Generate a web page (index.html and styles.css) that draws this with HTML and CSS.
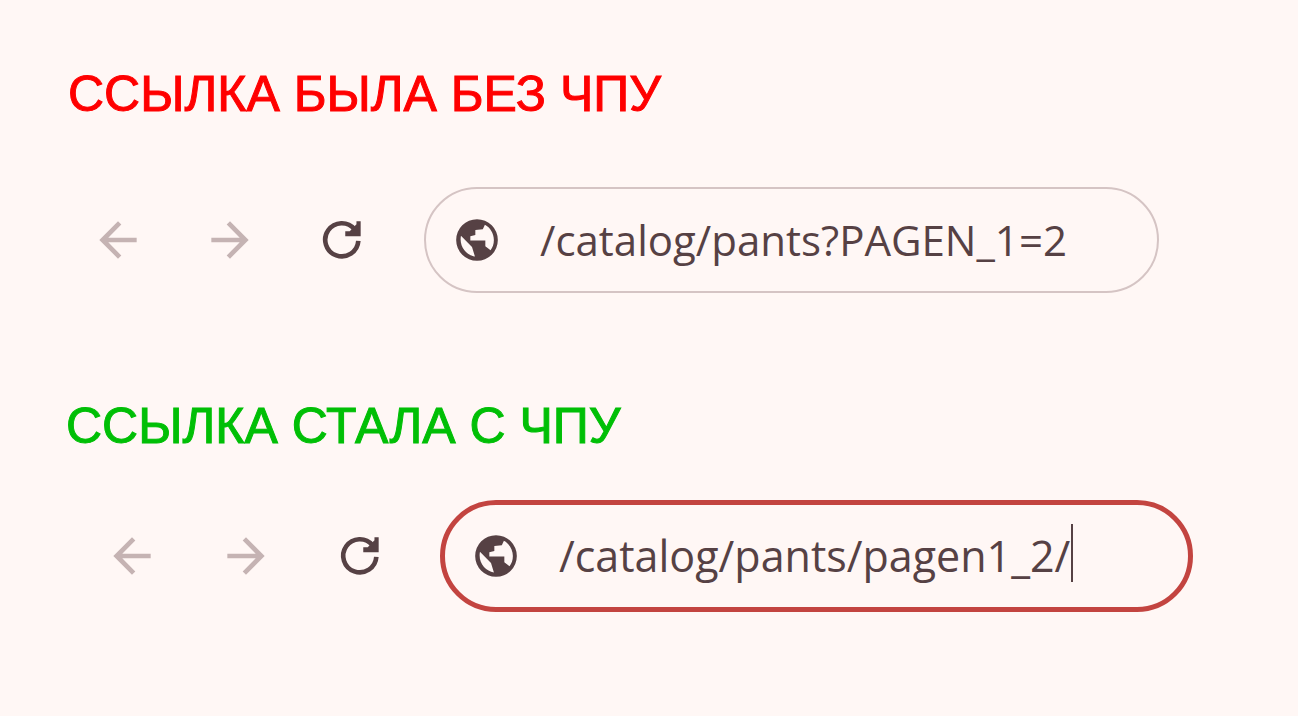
FILE: index.html
```html
<!DOCTYPE html>
<html lang="ru">
<head>
  <meta charset="UTF-8">
  <title>ЧПУ</title>
  <link rel="stylesheet" href="styles.css">
</head>
<body>

  <section class="example before">
    <h2>ССЫЛКА БЫЛА БЕЗ ЧПУ</h2>
    <div class="browser">
      <div class="nav">
        <button type="button" class="muted" aria-label="Назад">
          <svg viewBox="0 0 24 24"><path d="M20 11H7.83l5.59-5.59L12 4l-8 8 8 8 1.41-1.41L7.83 13H20v-2z"/></svg>
        </button>
        <button type="button" class="muted" aria-label="Вперёд">
          <svg viewBox="0 0 24 24"><path d="M12 4l-1.41 1.41L16.17 11H4v2h12.17l-5.58 5.59L12 20l8-8z"/></svg>
        </button>
        <button type="button" aria-label="Обновить">
          <svg viewBox="0 0 24 24"><path class="ring" d="M17.4 7.4A7.1 7.1 0 1 0 19 12.4"/><path d="M20 4v6.4h-6.6V8.3l1.9-.1 2.9-2.9V4z"/></svg>
        </button>
      </div>
      <label class="address">
        <svg viewBox="0 0 24 24"><path fill-rule="evenodd" d="M12 2a10 10 0 1 0 0 20 10 10 0 0 0 0-20zM4.3 9.9L9.6 15.4L11 19.9C7 19.4 3.3 15.4 4.3 9.9zM15.8 4.7C18.3 6 20.1 8.9 20.1 12 20.1 14 19.5 15.6 18.5 16.9L16 15V12.2H8.8V10.2L11.2 9.6V7.2L14.8 6.8z"/></svg>
        <input type="text" aria-label="Адрес без ЧПУ" value="/catalog/pants?PAGEN_1=2">
      </label>
    </div>
  </section>

  <section class="example after">
    <h2>ССЫЛКА СТАЛА С ЧПУ</h2>
    <div class="browser">
      <div class="nav">
        <button type="button" class="muted" aria-label="Назад">
          <svg viewBox="0 0 24 24"><path d="M20 11H7.83l5.59-5.59L12 4l-8 8 8 8 1.41-1.41L7.83 13H20v-2z"/></svg>
        </button>
        <button type="button" class="muted" aria-label="Вперёд">
          <svg viewBox="0 0 24 24"><path d="M12 4l-1.41 1.41L16.17 11H4v2h12.17l-5.58 5.59L12 20l8-8z"/></svg>
        </button>
        <button type="button" aria-label="Обновить">
          <svg viewBox="0 0 24 24"><path class="ring" d="M17.4 7.4A7.1 7.1 0 1 0 19 12.4"/><path d="M20 4v6.4h-6.6V8.3l1.9-.1 2.9-2.9V4z"/></svg>
        </button>
      </div>
      <label class="address">
        <svg viewBox="0 0 24 24"><path fill-rule="evenodd" d="M12 2a10 10 0 1 0 0 20 10 10 0 0 0 0-20zM4.3 9.9L9.6 15.4L11 19.9C7 19.4 3.3 15.4 4.3 9.9zM15.8 4.7C18.3 6 20.1 8.9 20.1 12 20.1 14 19.5 15.6 18.5 16.9L16 15V12.2H8.8V10.2L11.2 9.6V7.2L14.8 6.8z"/></svg>
        <span class="field">
          <input type="text" aria-label="Адрес с ЧПУ" value="/catalog/pants/pagen1_2/">
          <span class="caret"></span>
        </span>
      </label>
    </div>
  </section>

</body>
</html>
```
FILE: styles.css
```css
* {
  box-sizing: border-box;
}

body {
  margin: 0;
  padding: 64px 0;
  background: #fff7f5;
  color: #564144;
}

h2 {
  margin: 0;
  padding-left: 66px;
  font: 400 50px/60px "Liberation Sans", Arial, sans-serif;
  -webkit-text-stroke: 1px currentColor;
}

.before h2 {
  padding-left: 68px;
  color: #ff0000;
}

.after h2 {
  color: #00bf06;
}

.after {
  margin-top: 103px;
}

.browser {
  display: flex;
  align-items: center;
}

.before .browser {
  margin-top: 63px;
  padding: 0 139px 0 90px;
  gap: 54px;
}

.after .browser {
  margin-top: 44px;
  padding: 0 105px 0 104px;
  gap: 52px;
}

.nav {
  display: flex;
  gap: 56px;
}

.after .nav {
  gap: 58px;
}

.nav button {
  width: 56px;
  height: 56px;
  padding: 0;
  border: none;
  background: none;
  color: inherit;
  cursor: pointer;
}

.nav .muted {
  color: #c5b3b3;
}

svg {
  display: block;
  width: 100%;
  fill: currentColor;
}

.ring {
  fill: none;
  stroke: currentColor;
  stroke-width: 2;
}

.address {
  display: flex;
  align-items: center;
  flex: 1;
  min-width: 0;
  height: 106px;
  padding: 0 26px;
  gap: 38px;
  border: 2px solid #d5c4c4;
  border-radius: 56px;
}

.after .address {
  height: 112px;
  border: 5px solid #c34440;
}

.address svg {
  flex: none;
  width: 50px;
}

input {
  flex: 1;
  width: 100%;
  min-width: 0;
  height: 64px;
  padding: 0;
  border: none;
  outline: none;
  background: none;
  color: inherit;
  font: 400 42px/64px "Open Sans", "Noto Sans", sans-serif;
}

.after input {
  font-size: 43px;
}

.field {
  position: relative;
  display: flex;
  flex: 1;
  min-width: 0;
}

/* text cursor at the end of the address */
.caret {
  position: absolute;
  left: 512px;
  top: 0;
  width: 2px;
  height: 58px;
  background: #564144;
}
```
